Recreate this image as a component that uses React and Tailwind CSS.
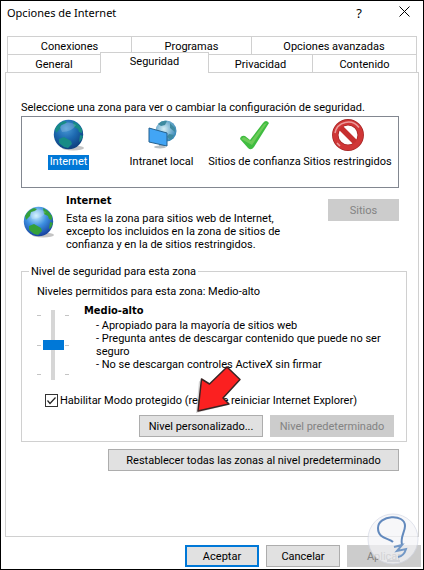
import { clsx } from "clsx";

const backTabs = ["Conexiones", "Programas", "Opciones avanzadas"];
const frontTabs = ["General", "Seguridad", "Privacidad", "Contenido"];

function Globe({ id, land, light, mid, dark, className }) {
  return (
    <svg viewBox="0 0 32 32" className={className} aria-hidden="true">
      <defs>
        <radialGradient id={id} cx="0.42" cy="0.3" r="0.72">
          <stop offset="0" stopColor={light} />
          <stop offset="0.5" stopColor={mid} />
          <stop offset="1" stopColor={dark} />
        </radialGradient>
      </defs>
      <ellipse cx="20" cy="29" rx="11" ry="2.5" fill="#c4c4c4" />
      <circle cx="15.5" cy="15.5" r="14.7" fill={`url(#${id})`} />
      <g fill={land}>
        <path d="M2 10 Q5 4 11 2 L14 3 L12 5 L8 6 L7 10 L3 14 Z" />
        <path d="M20 2 L25 5 L29 10 L29 14 L26 13 L25 10 L21 8 Z" />
        <path d="M6 20 L11 18 L18 22 L19 25 L15 29 L11 28 L6 24 Z" />
        <path d="M27 16 L30 17 Q29 21 26 23 Z" />
      </g>
      <path d="M7 8 Q14 0 23 6 Q19 13 9 13 Z" fill="#ffffff" opacity="0.18" />
    </svg>
  );
}

function IntranetIcon() {
  return (
    <svg viewBox="0 0 32 32" className="size-8" aria-hidden="true">
      <defs>
        <radialGradient id="intranet" cx="0.4" cy="0.4" r="0.65">
          <stop offset="0" stopColor="#d6eef6" />
          <stop offset="1" stopColor="#2d82b4" />
        </radialGradient>
      </defs>
      <circle cx="20" cy="12" r="10.5" fill="url(#intranet)" />
      <path d="M12 5 Q16 1 21 2 L19 6 L15 7 Z M24 4 L29 9 L29 13 L24 9 Z M23 15 L28 16 L25 21 L21 18 Z" fill="#3e8aa0" />
      <path d="M13 24 L18 24 L18 28 L13 28 Z" fill="#9aa5ab" />
      <ellipse cx="14" cy="28" rx="6" ry="1.5" fill="#b8c0c4" />
      <path d="M3 9 L21 14 V27 L3 23 Z" fill="#42a5f5" stroke="#24618f" />
    </svg>
  );
}

function CheckIcon() {
  return (
    <svg viewBox="0 0 32 32" className="size-8" aria-hidden="true">
      <path d="M1 20 Q2 16 6 17 L11 21 L24 4 Q27 0 30 4 L15 28 Q12 32 9 29 Z" fill="#3fbc40" />
      <path d="M2 20 L5 18 L12 22 L25 5 L28 4 L13 26 Z" fill="#6ccb58" />
    </svg>
  );
}

function BlockedIcon() {
  return (
    <svg viewBox="0 0 32 32" className="size-8" aria-hidden="true">
      <circle cx="16" cy="16" r="12.7" fill="none" stroke="#a82626" strokeWidth="6.5" />
      <path d="M7 7 L25 25" stroke="#c62f2f" strokeWidth="5.5" />
      <circle cx="16" cy="16" r="12.7" fill="none" stroke="#d03636" strokeWidth="4.8" />
      <path d="M3 14 A13.5 13.5 0 0 1 27 8.5 M5 24 L8 27" fill="none" stroke="#ec9a9a" strokeWidth="1.5" />
    </svg>
  );
}

const zones = [
  {
    label: "Internet",
    icon: <Globe id="zone" land="#178b86" light="#4a9ad6" mid="#1d69b0" dark="#0d3f7c" className="size-8" />,
  },
  { label: "Intranet local", icon: <IntranetIcon /> },
  { label: "Sitios de confianza", icon: <CheckIcon /> },
  { label: "Sitios restringidos", icon: <BlockedIcon /> },
];

function Button({ className, primary, ...props }) {
  return (
    <button
      type="button"
      className={clsx(
        "flex h-[22px] items-center justify-center whitespace-nowrap bg-[#e1e1e1] disabled:bg-[#cccccc] disabled:text-[#838383]",
        primary ? "border-2 border-[#0078d7]" : "border border-[#adadad] disabled:border-[#cccccc]",
        className
      )}
      {...props}
    />
  );
}

function Tab({ label, selected, className }) {
  return (
    <button
      type="button"
      role="tab"
      aria-selected={selected}
      className={clsx("border-[#d0d0d0] bg-white text-center", className)}
    >
      {label}
    </button>
  );
}

function TitleBar() {
  return (
    <header className="flex items-start justify-between pt-1 pr-px pb-[15px] pl-1.5 font-['Noto_Sans',sans-serif] leading-4">
      <h1>Opciones de Internet</h1>
      <div className="flex">
        <button type="button" aria-label="Ayuda" className="w-[54px] text-[13px]">
          ?
        </button>
        <button type="button" aria-label="Cerrar" className="flex h-4 w-9 items-center justify-center">
          <svg viewBox="0 0 11 11" className="mb-1 size-[11px]" aria-hidden="true">
            <path d="M0.5 0.5 L10.5 10.5 M10.5 0.5 L0.5 10.5" stroke="#000" />
          </svg>
        </button>
      </div>
    </header>
  );
}

function Ticks() {
  return (
    <span className="flex flex-col justify-between py-[5px]">
      <i className="h-px w-1 bg-[#c4c4c4]" />
      <i className="h-px w-1 bg-[#c4c4c4]" />
      <i className="h-px w-1 bg-[#c4c4c4]" />
    </span>
  );
}

function LevelSlider() {
  return (
    <div className="mt-1.5 flex h-[70px] shrink-0 gap-px">
      <Ticks />
      <input
        type="range"
        aria-label="Nivel de seguridad"
        min="0"
        max="2"
        defaultValue="1"
        className="h-full w-[22px] appearance-none bg-[linear-gradient(#d6d6d6,#d6d6d6)] bg-[length:4px_100%] bg-center bg-no-repeat [writing-mode:vertical-lr] [&::-webkit-slider-thumb]:h-[10px] [&::-webkit-slider-thumb]:w-[21px] [&::-webkit-slider-thumb]:appearance-none [&::-webkit-slider-thumb]:bg-[#0078d7]"
      />
      <Ticks />
    </div>
  );
}

function Arrow() {
  return (
    <svg viewBox="0 0 48 50" className="pointer-events-none absolute -top-[50px] left-[55px] h-[50px] w-12" aria-hidden="true">
      <path d="M2 48 L5 16 L14 20 L31 4 L45 16 L28 34 L34 40 Z" fill="#777" opacity="0.3" />
      <path d="M4 46 L7.5 14 L15.5 19 L33 2 L46 14.5 L29 33 L35 39 Z" fill="#fb2020" stroke="#3a2424" strokeWidth="1.5" strokeLinejoin="round" />
    </svg>
  );
}

function Watermark() {
  return (
    <svg viewBox="0 0 52 52" className="pointer-events-none absolute right-1 bottom-1 size-[52px]" aria-hidden="true">
      <circle cx="26" cy="26" r="25" fill="#f4f4f7" opacity="0.7" stroke="#d5d9e6" />
      <path d="M26 29 C22 25 11 26 11 15 C11 2 38 0 38 13 C38 19 33 24 35 32" fill="none" stroke="#6289bd" strokeWidth="2" />
      <path d="M27 34 L35 32 L30 38 L39 36 Q37 43 31 44" fill="none" stroke="#7398c6" strokeWidth="2" />
      <path d="M20 48 H33" stroke="#b9bdc6" />
    </svg>
  );
}

export default function App() {
  return (
    <main className="relative flex min-h-dvh flex-col border border-black bg-white font-[Roboto,sans-serif] text-[11px] leading-[13px] text-black">
      <TitleBar />

      <div role="tablist" className="px-1.5">
        <div className="grid grid-cols-[124fr_120fr_165fr] border-l border-[#d0d0d0]">
          {backTabs.map((label) => (
            <Tab key={label} label={label} selected={false} className="h-[18px] border-t border-r pt-0.5" />
          ))}
        </div>
        <div className="grid grid-cols-[93fr_108fr_104fr_104fr] items-end border-l border-[#d0d0d0]">
          {frontTabs.map((label) => (
            <Tab
              key={label}
              label={label}
              selected={label === "Seguridad"}
              className={
                label === "Seguridad"
                  ? "relative z-10 -mt-0.5 -mb-px -ml-px h-[21px] border-t border-r border-l pb-1"
                  : "h-[18px] border-t border-r pt-0.5"
              }
            />
          ))}
        </div>
      </div>

      <section role="tabpanel" className="mx-1 flex flex-1 flex-col border border-[#d0d0d0] pt-7 pr-[11px] pl-[15px]">
        <p className="whitespace-nowrap">Seleccione una zona para ver o cambiar la configuración de seguridad.</p>
        <div className="mt-0.5 mr-2 grid grid-cols-4 border border-[#828790] pt-0.5 pr-1 pb-[17px]">
          {zones.map(({ label, icon }, index) => (
            <button key={label} type="button" className="flex flex-col items-center gap-1">
              {icon}
              <span className={clsx("px-0.5 pb-0.5 whitespace-nowrap", index === 0 && "bg-[#0078d7] text-white")}>
                {label}
              </span>
            </button>
          ))}
        </div>

        <div className="mt-1.5 mr-2 flex items-start">
          <Globe
            id="current"
            land="#35a03a"
            light="#c9f0ff"
            mid="#3d8fe0"
            dark="#153f9c"
            className="mt-3 ml-0.5 size-8 shrink-0"
          />
          <div className="ml-[11px] flex-1">
            <h2 className="font-['DejaVu_Sans_Condensed','DejaVu_Sans',sans-serif] font-bold">Internet</h2>
            <p className="mt-[5px] max-w-[228px]">
              Esta es la zona para sitios web de Internet, excepto los incluidos en la zona de sitios de confianza y en
              la de sitios restringidos.
            </p>
          </div>
          <Button disabled className="mt-[5px] w-[71px]">
            Sitios
          </Button>
        </div>

        <div className="mt-[14px]">
          <fieldset className="border border-[#d0d0d0] pr-3 pb-1 pl-[15px]">
            <legend className="-ml-2 px-0.5">Nivel de seguridad para esta zona</legend>
            <p className="mt-[7px]">Niveles permitidos para esta zona: Medio-alto</p>
            <div className="mt-1.5 flex items-start">
              <LevelSlider />
              <div className="ml-[15px]">
                <h3 className="font-['DejaVu_Sans_Condensed','DejaVu_Sans',sans-serif] font-bold">Medio-alto</h3>
                <ul className="mt-0.5 ml-3 max-w-[290px]">
                  <li>- Apropiado para la mayoría de sitios web</li>
                  <li>
                    - Pregunta antes de descargar contenido que puede no ser
                    <br />
                    seguro
                  </li>
                  <li>- No se descargan controles ActiveX sin firmar</li>
                </ul>
              </div>
            </div>
            <label className="mt-[14px] ml-2 flex items-center gap-0.5">
              <span className="grid size-[13px]">
                <input
                  type="checkbox"
                  defaultChecked
                  className="peer col-start-1 row-start-1 size-[13px] appearance-none border border-[#333]"
                />
                <svg
                  viewBox="0 0 13 13"
                  className="pointer-events-none invisible col-start-1 row-start-1 size-[13px] peer-checked:visible"
                  aria-hidden="true"
                >
                  <path d="M2.5 6.5 L5 9.5 L10.5 3.5" fill="none" stroke="#222" strokeWidth="1.2" />
                </svg>
              </span>
              Habilitar Modo protegido (requiere reiniciar Internet Explorer)
            </label>
            <div className="mt-2 flex justify-end gap-[7px]">
              <div className="relative">
                <Button className="w-[124px]">Nivel personalizado...</Button>
                <Arrow />
              </div>
              <Button disabled className="w-[124px]">
                Nivel predeterminado
              </Button>
            </div>
          </fieldset>
        </div>

        <Button className="mt-[7px] mr-2 w-[291px] self-end">Restablecer todas las zonas al nivel predeterminado</Button>
      </section>

      <footer className="flex justify-end gap-[7px] px-0.5 pt-2 pb-0.5">
        <Button primary className="w-[74px]">
          Aceptar
        </Button>
        <Button className="w-[74px]">Cancelar</Button>
        <Button disabled className="w-[74px]">
          Aplicar
        </Button>
      </footer>
      <Watermark />
    </main>
  );
}
